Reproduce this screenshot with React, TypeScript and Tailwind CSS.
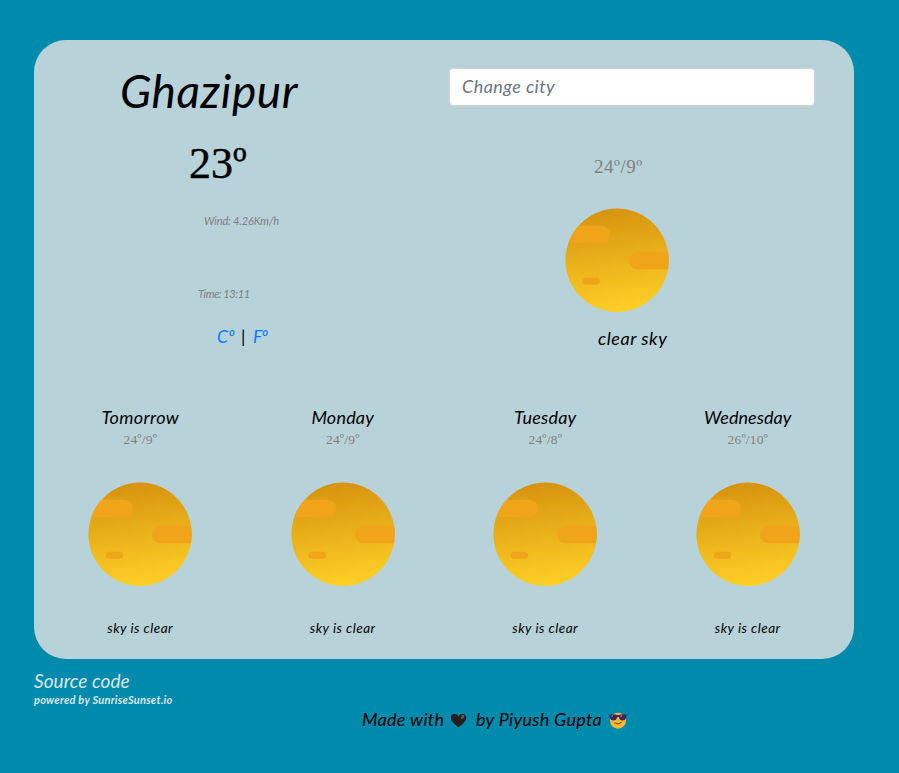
import React from "react";

function Sun() {
  return (
    <svg viewBox="0 0 104 104" className="block h-[104px] w-[104px]" aria-hidden="true">
      <defs>
        <linearGradient id="sun" x1="0.43" y1="0" x2="0.57" y2="1">
          <stop offset="0" stopColor="#d6930f" />
          <stop offset="1" stopColor="#ffd026" />
        </linearGradient>
        <clipPath id="disc">
          <circle cx="52.1" cy="52.2" r="51.7" />
        </clipPath>
      </defs>
      <circle cx="52.1" cy="52.2" r="51.7" fill="url(#sun)" />
      <g clipPath="url(#disc)" fill="#f0a419">
        <rect x="-10" y="17.7" width="55.2" height="17.5" rx="8.75" />
        <rect x="64" y="43.7" width="60" height="17.5" rx="8.75" />
        <rect x="17.5" y="69.7" width="17.5" height="7" rx="3.5" fill="#eea51a" />
      </g>
    </svg>
  );
}

function Heart() {
  return (
    <svg viewBox="0 0 17 15" className="h-[15px] w-[17px]" aria-label="black heart">
      <path d="M8.5 14.2C6 12.5.8 8.8.8 4.8.8 2.2 2.6.8 4.6.8c1.7 0 3.2 1 3.9 2.6C9.2 1.8 10.7.8 12.4.8c2 0 3.8 1.4 3.8 4C16.2 8.8 11 12.5 8.5 14.2Z" fill="#202022" />
      <ellipse cx="12.6" cy="4" rx="2.3" ry="1.4" fill="#57575b" transform="rotate(-55 12.6 4)" />
    </svg>
  );
}

function CoolFace() {
  return (
    <svg viewBox="0 0 18 17" className="h-[17px] w-[18px]" aria-label="smiling face with sunglasses">
      <circle cx="9" cy="8.7" r="8" fill="#fcb634" />
      <path d="M.3 2.7Q4.5 1.4 9 3.2Q13.5 1.4 17.7 2.7L17.2 5.5Q16.5 8.5 13.5 8.5Q10.6 8.5 9.7 5H8.3Q7.4 8.5 4.5 8.5Q1.5 8.5.8 5.5Z" fill="#40265c" />
      <path d="M2.5 4.5L4 3.6M11.5 4.5L13 3.6" stroke="#a78dbb" strokeWidth="1.2" />
      <path d="M5.5 11Q9 13.3 12.5 10.6" fill="none" stroke="#794326" strokeWidth="1" strokeLinecap="round" />
    </svg>
  );
}

const days = [
  { name: "Tomorrow", temp: "24º/9º", spacing: "tracking-[0.35px]" },
  { name: "Monday", temp: "24º/9º", spacing: "tracking-[0.2px]" },
  { name: "Tuesday", temp: "24º/8º", spacing: "tracking-[0.2px]" },
  { name: "Wednesday", temp: "26º/10º", spacing: "tracking-[0.05px]" },
];

export default function App() {
  return (
    <div className="h-[773px] w-[899px] overflow-hidden bg-[#008bad] pl-[34px] pt-10 font-['Lato',sans-serif] italic text-black">
      <main className="h-[619px] w-[820px] rounded-[32px] bg-[#b8d2d9] px-[5px]">
        <div className="flex h-[365px]">
          <section className="w-[410px] whitespace-nowrap">
            <h1 className="pl-[81px] pt-[21px] text-[46px] leading-[60px] tracking-[0.6px]">Ghazipur</h1>
            <div className="mt-[13px] pl-[150px] font-['Liberation_Serif',serif] text-[44px] not-italic leading-[60px] [-webkit-text-stroke:0.4px_black]">23º</div>
            <div className="mt-[19px] pl-[165px] text-[11px] leading-[16px] tracking-[-0.15px] text-[#808080]">Wind: 4.26Km/h</div>
            <div className="mt-[57px] pl-[159px] text-[11px] leading-[16px] tracking-[-0.4px] text-[#808080]">Time: 13:11</div>
            <div className="mt-[23px] flex pl-[178px] text-[17.5px] leading-[24px]">
              <a className="w-[24px] text-[#007bff]">Cº</a>
              <span className="w-[12px] not-italic">|</span>
              <a className="tracking-[-1px] text-[#007bff]">Fº</a>
            </div>
          </section>
          <section className="w-[366px] pt-[28px]">
            <input
              placeholder="Change city"
              className="block h-[38px] w-[366px] rounded-[4px] border border-[#ced4da] bg-white px-[12px] pb-[3px] text-[18px] italic tracking-[0.45px] outline-none placeholder:text-[#6c757d]"
            />
            <div className="mt-[49px] pl-[145px] font-['Liberation_Serif',serif] text-[19px] not-italic leading-[24px] tracking-[0.5px] text-[#808080]">24º/9º</div>
            <div className="mt-[29px] pl-[116px]"><Sun /></div>
            <div className="mt-[14px] pl-[149px] text-[18px] leading-[24px] tracking-[0.55px]">clear sky</div>
          </section>
        </div>
        <section className="grid grid-cols-4">
          {days.map((day) => (
            <article key={day.name} className="flex flex-col items-center whitespace-nowrap">
              <h2 className={`text-[18px] leading-[24px] ${day.spacing}`}>{day.name}</h2>
              <div className="mt-[2px] font-['Liberation_Serif',serif] text-[13.5px] not-italic leading-[18px] tracking-[0.2px] text-[#808080]">{day.temp}</div>
              <div className="mt-[33px]"><Sun /></div>
              <div className="mt-[32px] text-[13.5px] leading-[20px] tracking-[0.5px]">sky is clear</div>
            </article>
          ))}
        </section>
      </main>
      <footer className="whitespace-nowrap">
        <a className="mt-[10px] block text-[19px] leading-[24px] tracking-[0.05px] text-[#dce6e7]">Source code</a>
        <a className="-mt-px block text-[11px] font-bold leading-[15px] tracking-[0.24px] text-[#dce6e7]">powered by SunriseSunset.io</a>
        <div className="flex h-[24px] items-center pl-[328px] text-[18px] leading-[24px] tracking-[0.3px]">
          <span className="w-[88px]">Made with</span>
          <span className="pt-[2px]"><Heart /></span>
          <span className="ml-[9px] w-[133px]">by Piyush Gupta</span>
          <span className="pt-[2px]"><CoolFace /></span>
        </div>
      </footer>
    </div>
  );
}
